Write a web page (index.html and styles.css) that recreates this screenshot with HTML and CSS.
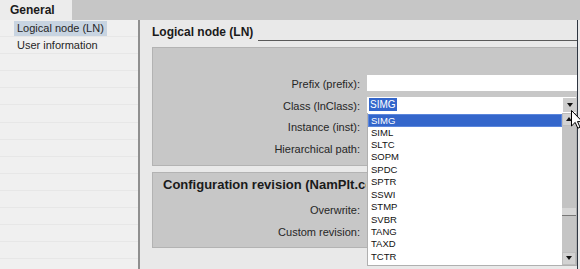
FILE: index.html
```html
<!DOCTYPE html>
<html lang="en">
<head>
  <meta charset="UTF-8" />
  <title>Properties - General</title>
  <link rel="stylesheet" href="styles.css">
</head>
<body>
  <div class="tabs">
    <div class="tab">General</div>
  </div>

  <div class="main">
    <nav class="side">
      <div class="row sel"><span>Logical node (LN)</span></div>
      <div class="row"><span>User information</span></div>
      <div class="row"></div>
      <div class="row"></div>
      <div class="row"></div>
      <div class="row"></div>
      <div class="row"></div>
      <div class="row"></div>
      <div class="row"></div>
      <div class="row"></div>
      <div class="row"></div>
      <div class="row"></div>
      <div class="row"></div>
      <div class="row"></div>
      <div class="row"></div>
    </nav>

    <section class="pane">
      <h2 class="head"><span>Logical node (LN)</span><div class="rule"></div></h2>

      <div class="box box1">
        <div class="form">
          <label>Prefix (prefix):</label>
          <div class="field"></div>

          <label>Class (lnClass):</label>
          <div class="field select">
            <span class="value">SIMG</span>
            <span class="drop"><i class="tri"></i></span>

            <div class="list">
              <ul class="items">
                <li class="on">SIMG</li>
                <li>SIML</li>
                <li>SLTC</li>
                <li>SOPM</li>
                <li>SPDC</li>
                <li>SPTR</li>
                <li>SSWI</li>
                <li>STMP</li>
                <li>SVBR</li>
                <li>TANG</li>
                <li>TAXD</li>
                <li>TCTR</li>
              </ul>
              <div class="scroll">
                <div class="sbtn"><i class="tri up"></i></div>
                <div class="thumb"></div>
                <div class="track"></div>
                <div class="sbtn"><i class="tri"></i></div>
              </div>
            </div>

            <svg class="cursor" width="12" height="19" viewBox="0 0 12 19">
              <path d="M0.5 0.5 L0.5 16 L4.2 12.4 L6.8 18.2 L9 17.2 L6.5 11.6 L11.3 11.6 Z" fill="#fff" stroke="#000" stroke-width="1"/>
            </svg>
          </div>

          <label>Instance (inst):</label>
          <div></div>

          <label>Hierarchical path:</label>
          <div></div>
        </div>
      </div>

      <div class="box box2">
        <h3 class="sub">Configuration revision (NamPlt.configRev)</h3>
        <div class="form">
          <label>Overwrite:</label>
          <div></div>
          <label>Custom revision:</label>
          <div></div>
        </div>
      </div>
    </section>

    <div class="edge"></div>
  </div>
</body>
</html>
```

FILE: styles.css
```css
* {
  box-sizing: border-box;
}
body {
  margin: 0;
  width: 580px;
  height: 269px;
  overflow: hidden;
  background-color: #e9e9e9;
  font-family: "Liberation Sans", Arial, sans-serif;
  font-size: 11px;
  color: #262626;
}

/* tab strip */
.tabs {
  height: 20px;
  background-color: #c6c6c6;
  display: flex;
}
.tab {
  width: 72px;
  background-color: #ececec;
  padding-left: 10px;
  font-weight: bold;
  font-size: 12px;
  line-height: 21px;
  color: #1a1a1a;
}

.main {
  display: flex;
  height: 249px;
}

/* left navigation */
.side {
  flex: none;
  width: 140px;
  background-color: #f0f0f0;
  border-right: 2px solid #8f8f8f;
}
.row {
  height: 17.1px;
  border-bottom: 1px solid #e7e7e7;
  padding-left: 14px;
  display: flex;
  align-items: center;
}
.row span {
  padding: 0 3px;
  line-height: 15px;
}
.row.sel span {
  background-color: #c8d4e1;
}

/* right pane */
.pane {
  flex: none;
  width: 437px;
  padding-left: 12px;
}
.head {
  margin: 0;
  height: 21px;
  display: flex;
  align-items: flex-end;
  font-size: 12px;
  font-weight: bold;
  color: #1a1a1a;
}
.head span {
  line-height: 14px;
  padding-bottom: 2px;
}
.rule {
  flex: 1;
  margin-left: 5px;
  border-bottom: 1px solid #5a5a5a;
}

.box {
  margin-top: 6px;
  background-color: #c7c7c7;
  border: 1px solid #b3b3b3;
  border-right: none;
}
.box1 {
  height: 119px;
  padding-top: 27px;
}
.box2 {
  height: 76px;
  padding-top: 4px;
}
.sub {
  margin: 0 0 0 10px;
  width: 203px;
  overflow: hidden;
  font-size: 13px;
  line-height: 15px;
  white-space: nowrap;
  color: #1a1a1a;
}
.box2 .form {
  margin-top: 9px;
}

.form {
  display: grid;
  grid-template-columns: 207px 1fr;
  grid-auto-rows: 16px;
  column-gap: 7px;
  row-gap: 5.5px;
}
.form label {
  text-align: right;
  line-height: 18px;
  white-space: nowrap;
}
.field {
  background-color: #fff;
}

/* class select */
.select {
  position: relative;
  margin-right: 1px;
  display: flex;
  align-items: center;
}
.value {
  margin-left: 2px;
  padding: 0 1px;
  background-color: #3466cb;
  color: #fff;
  font-size: 10px;
  line-height: 13px;
}
.drop {
  margin-left: auto;
  width: 13px;
  height: 14px;
  background-color: #cdcdcd;
  display: flex;
  align-items: center;
  justify-content: center;
}
.tri {
  width: 0;
  height: 0;
  border-left: 3.5px solid transparent;
  border-right: 3.5px solid transparent;
  border-top: 4px solid #111;
}
.tri.up {
  border-top: none;
  border-bottom: 4px solid #111;
}

.list {
  position: absolute;
  top: 16px;
  left: 0;
  width: 210px;
  height: 153px;
  display: flex;
  background-color: #fff;
  border: 1px solid #b0b0b0;
  border-top: none;
}
.items {
  list-style: none;
  margin: 0;
  padding: 1px 0 0;
  flex: 1;
}
.items li {
  height: 12.45px;
  line-height: 12.45px;
  padding-left: 3px;
  font-size: 9.5px;
  color: #111;
}
.items li.on {
  height: 13px;
  background-color: #3466cb;
  border: 1px solid #5b86dc;
  padding-left: 2px;
  line-height: 11px;
  color: #fff;
}

.scroll {
  flex: none;
  width: 14px;
  background-color: #c5c5c5;
  display: flex;
  flex-direction: column;
}
.sbtn {
  height: 13px;
  background-color: #d2d2d2;
  border: 1px solid #bdbdbd;
  display: flex;
  align-items: center;
  justify-content: center;
}
.thumb {
  height: 90px;
  background-color: #c3c3c3;
  border-bottom: 1px solid #777;
  box-shadow: inset 0 -7px 0 #d6d6d6;
}
.track {
  flex: 1;
}

.cursor {
  position: absolute;
  left: 204px;
  top: 13px;
}

.edge {
  flex: none;
  width: 1px;
  background-color: #2e3642;
}
```
